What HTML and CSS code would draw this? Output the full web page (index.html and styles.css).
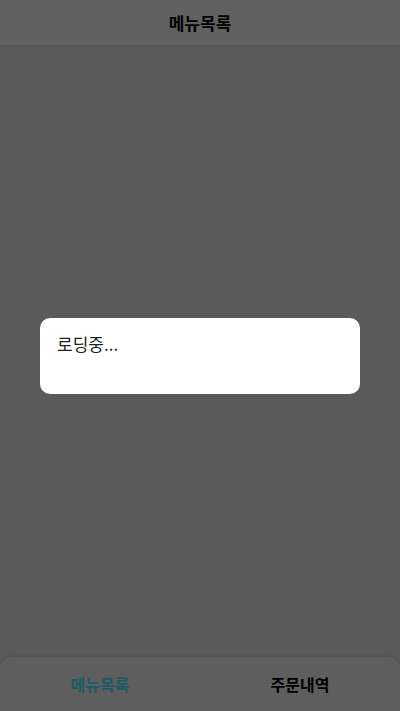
FILE: index.html
```html
<!DOCTYPE html>
<html lang="ko">
<head>
<meta charset="utf-8">
<link rel="stylesheet" href="styles.css">
</head>
<body>
<div class="app">
  <header class="header">메뉴목록</header>
  <main class="content"></main>
  <nav class="tabbar">
    <div class="tab active">메뉴목록</div>
    <div class="tab">주문내역</div>
  </nav>
</div>
<div class="overlay">
  <div class="modal">로딩중...</div>
</div>
</body>
</html>
```
FILE: styles.css
```css
html, body {
  margin: 0;
  padding: 0;
  height: 100%;
}
body {
  font-family: "Noto Sans CJK KR", "Noto Sans", sans-serif;
  background: #5a5a5a;
}
.app {
  height: 711px;
  display: flex;
  flex-direction: column;
}
.header {
  height: 45px;
  flex: none;
  display: flex;
  align-items: center;
  justify-content: center;
  background: #616161;
  color: #000;
  font-size: 17px;
  font-weight: 700;
  box-shadow: 0 1px 2px rgba(0,0,0,0.08);
}
.content {
  flex: 1;
}
.tabbar {
  height: 54px;
  flex: none;
  display: flex;
  background: #5e5e5e;
  border-radius: 12px 12px 0 0;
  box-shadow: 0 -1px 3px rgba(0,0,0,0.1);
}
.tab {
  flex: 1;
  display: flex;
  align-items: center;
  justify-content: center;
  font-size: 16px;
  font-weight: 700;
  color: #000;
}
.tab.active {
  color: #1a5c63;
}
.overlay {
  position: fixed;
  inset: 0;
  display: flex;
  align-items: center;
  justify-content: center;
}
.modal {
  width: 320px;
  height: 76px;
  box-sizing: border-box;
  padding: 14px 17px;
  background: #fff;
  border-radius: 10px;
  font-size: 17px;
  line-height: 24px;
  color: #222;
}
```
